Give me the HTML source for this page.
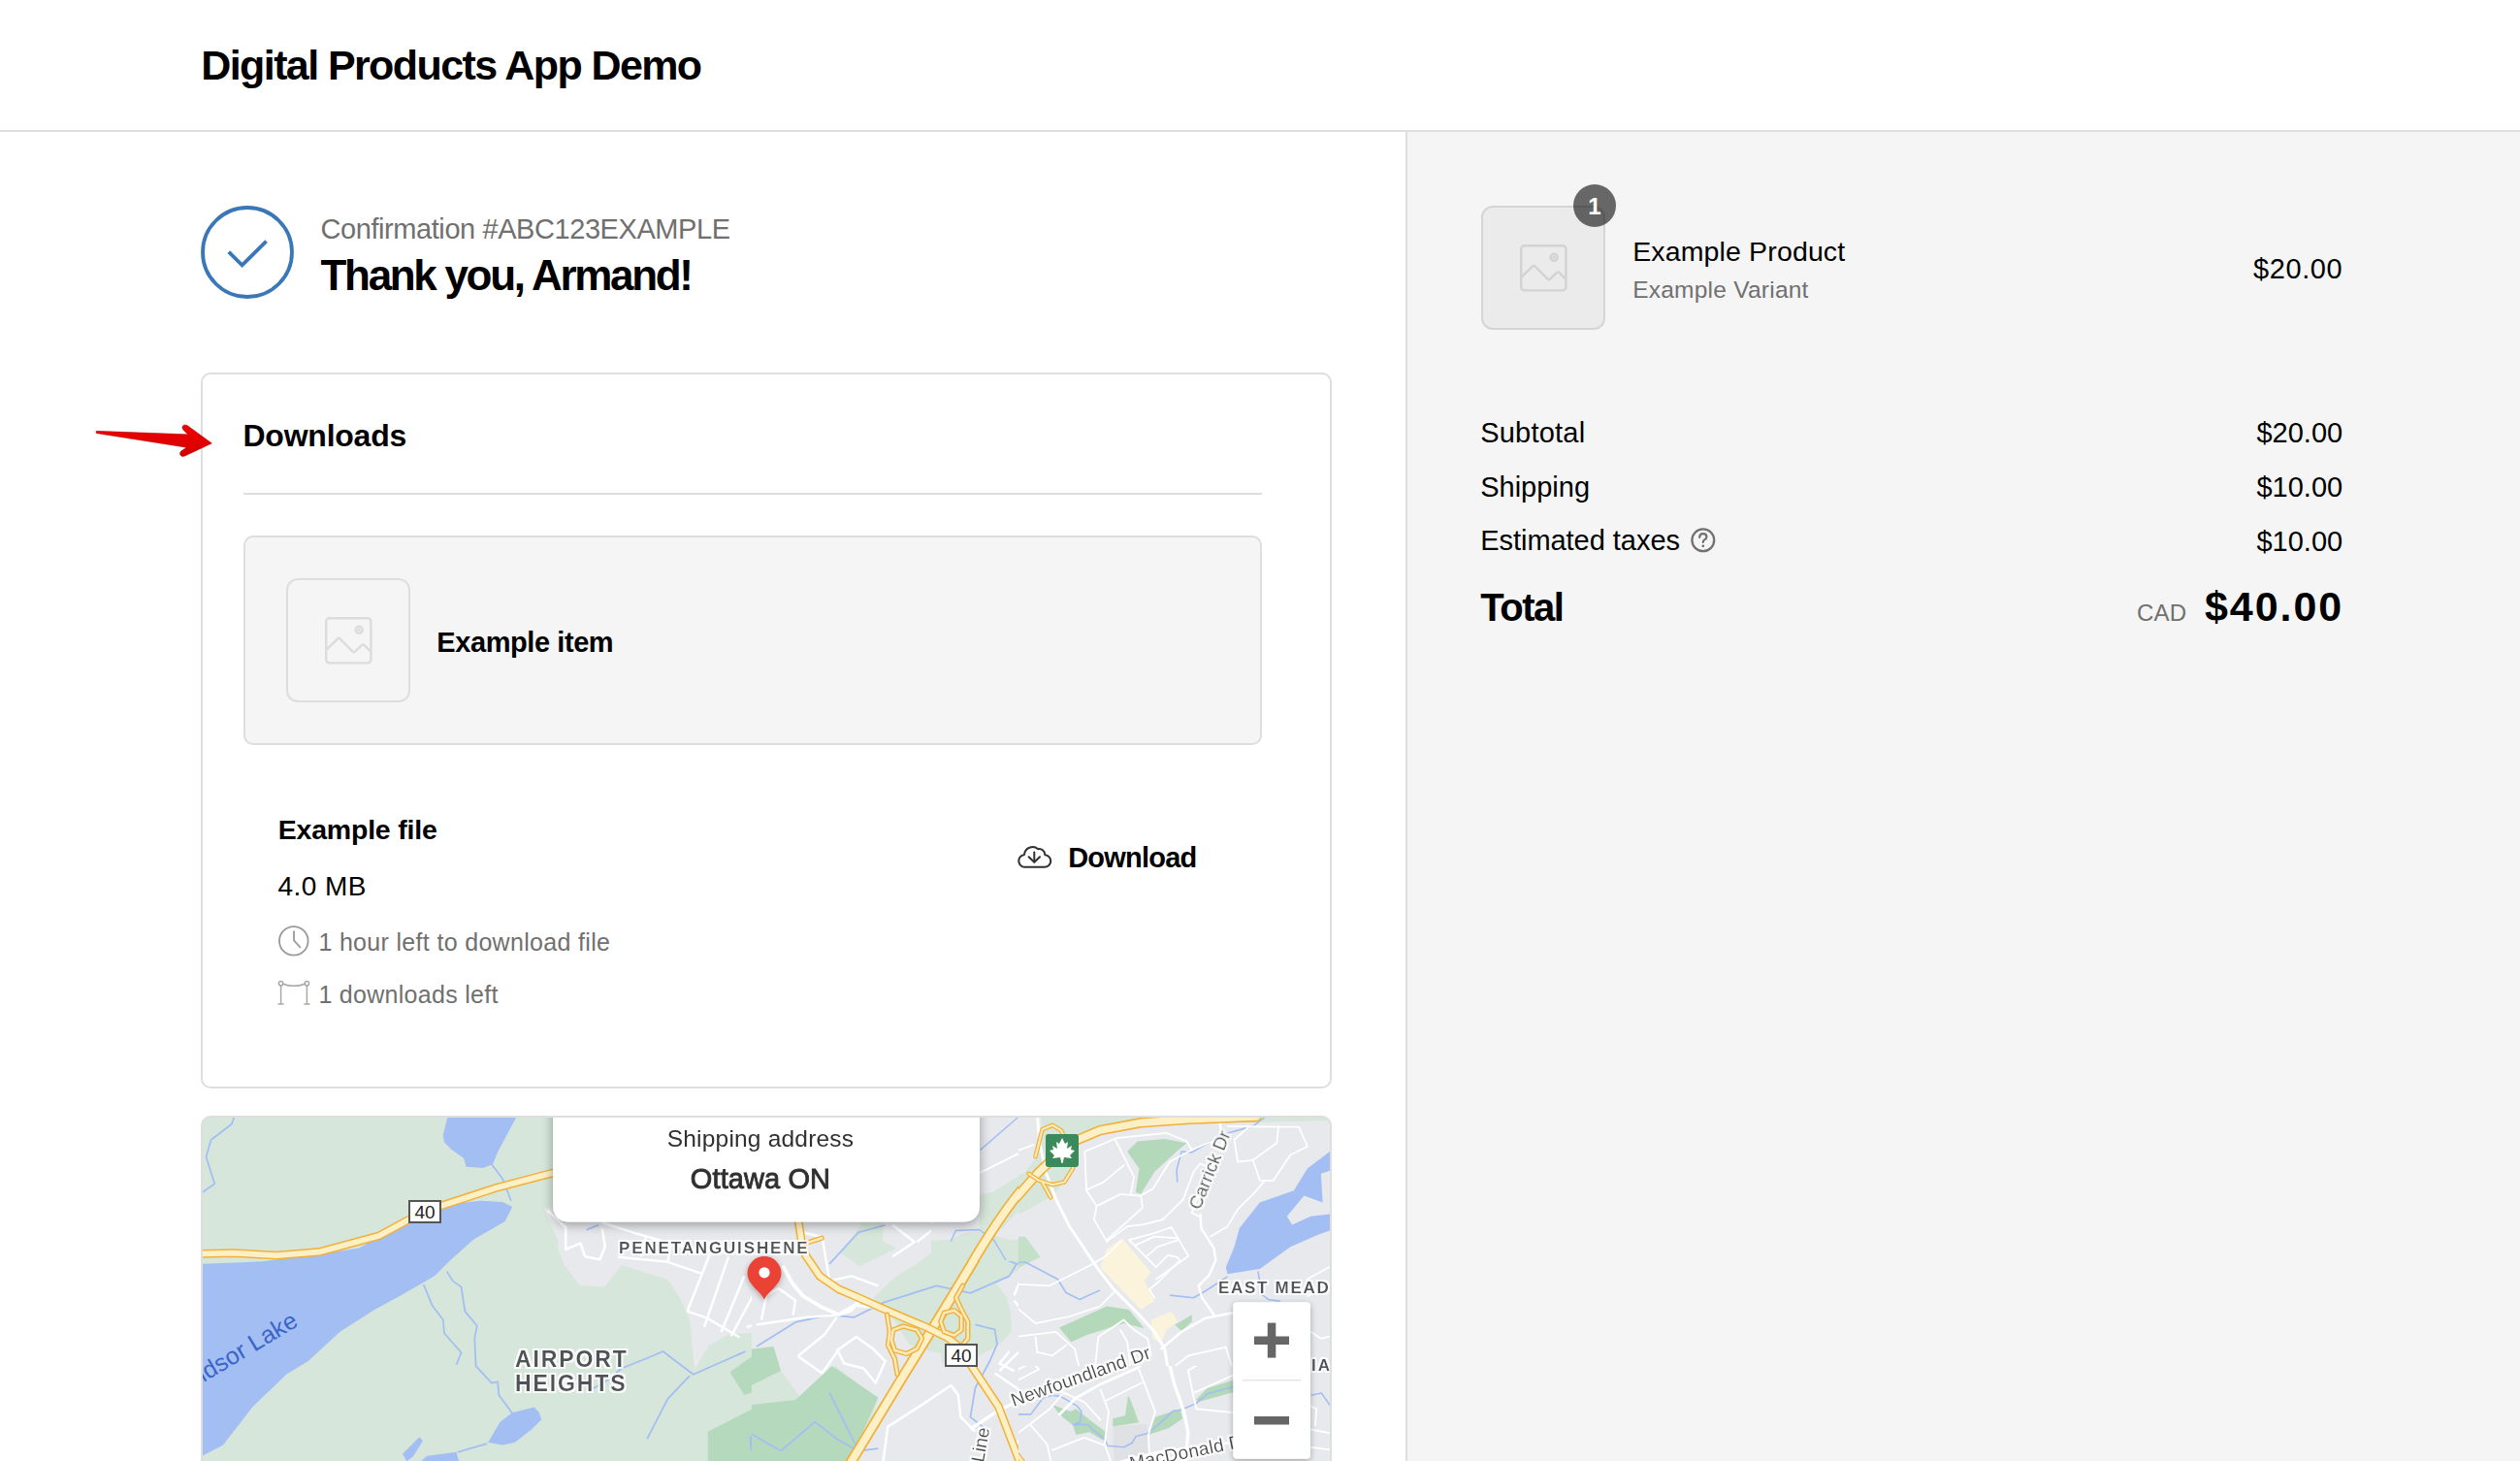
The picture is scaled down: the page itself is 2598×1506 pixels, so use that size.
<!DOCTYPE html>
<html><head><meta charset="utf-8"><style>
html,body{margin:0;padding:0;}
body{width:2598px;height:1506px;position:relative;overflow:hidden;background:#fff;font-family:"Liberation Sans",sans-serif;}
.t{position:absolute;white-space:nowrap;}
.a{position:absolute;box-sizing:border-box;}
</style></head><body>
<!-- header border -->
<div class="a" style="left:0;top:134px;width:2598px;height:2px;background:#dedede"></div>
<!-- side panel -->
<div class="a" style="left:1449px;top:134px;width:1149px;height:1372px;background:#f5f5f5;border-left:2px solid #dedede;border-top:2px solid #dedede"></div>
<!-- check circle -->
<svg class="a" style="left:0;top:0;z-index:5" width="1449" height="1506" viewBox="0 0 1449 1506">
<circle cx="255" cy="260" r="46" fill="none" stroke="#3a77b8" stroke-width="3.8"/>
<polyline points="235.8,259.6 249.6,273.4 274.6,248.6" fill="none" stroke="#3a77b8" stroke-width="3.8"/>
<defs><linearGradient id="arrowg" x1="0" y1="0" x2="0" y2="1"><stop offset="0" stop-color="#f00000"/><stop offset="1" stop-color="#d20000"/></linearGradient></defs>
<!-- red arrow -->
<path d="M99.2,444.3 L193.6,447.8 L189,443.2 Q186.6,440 189.2,438.4 Q191.2,437.2 193.4,438.8 L218.4,456.9 L190.6,470.1 Q187.4,471.4 185.9,469 Q184.6,466.4 187.4,464.6 L192.2,461.2 L99.2,446.6 Z" fill="url(#arrowg)" stroke="#a80000" stroke-width="0.5"/>
<!-- clock icon -->
<circle cx="302.8" cy="969.9" r="14.8" fill="none" stroke="#9a9a9a" stroke-width="1.8"/>
<polyline points="303,959.6 303,969.4 309.9,977" fill="none" stroke="#9a9a9a" stroke-width="1.8"/>
<!-- stanchion icon -->
<g fill="none" stroke="#a8a8a8" stroke-width="1.5">
<circle cx="289.6" cy="1013.8" r="2.2"/>
<circle cx="316.4" cy="1013.8" r="2.2"/>
<path d="M291.8,1014.2 Q303,1018.5 314.2,1014.2"/>
<line x1="289.6" y1="1016" x2="289.6" y2="1035"/>
<line x1="316.4" y1="1016" x2="316.4" y2="1035"/>
<line x1="286.5" y1="1035" x2="292.6" y2="1035"/>
<line x1="313.4" y1="1035" x2="319.5" y2="1035"/>
</g>
<!-- cloud download -->
<g fill="none" stroke="#303030" stroke-width="2" stroke-linejoin="round" stroke-linecap="round">
<path d="M1057.5,893.8 A5.9,5.9 0 0 1 1056,881 A8.6,8.6 0 0 1 1070.2,875.2 A6,6 0 0 1 1077.3,881.2 A6.3,6.3 0 0 1 1076.5,893.8 Z"/>
<polyline points="1066.3,878.4 1066.3,888.6"/>
<polyline points="1060.6,883.2 1066.3,888.8 1072,883.2"/>
</g>

</svg>
<!-- downloads card -->
<div class="a" style="left:207px;top:384px;width:1166px;height:738px;border:2px solid #dedede;border-radius:10px"></div>
<div class="a" style="left:251px;top:508px;width:1050px;height:2px;background:#dedede"></div>
<div class="a" style="left:251px;top:552px;width:1050px;height:216px;background:#f5f5f5;border:2px solid #dedede;border-radius:10px"></div>
<div class="a" style="left:295px;top:596px;width:128px;height:128px;border:2px solid #dedede;border-radius:12px"></div>
<svg class="a" style="left:335.2px;top:636px;" width="50" height="50" viewBox="0 0 50 50">
<g fill="none" stroke="#dcdcdc" stroke-width="2.4" stroke-linejoin="round">
<rect x="1.2" y="1.2" width="46.2" height="46.2" rx="3.5"/>
<circle cx="35.2" cy="13.3" r="3.6"/><circle cx="35.2" cy="13.3" r="0.7"/>
<path d="M1.5,33.6 L13.2,22.3 Q14.3,21.2 15.4,22.3 L28.6,35.6 Q29.8,36.8 31,35.6 L38.2,28.9 Q39.4,27.9 40.5,29 L47,35.4"/>
</g></svg>
<!-- order summary thumb -->
<div class="a" style="left:1527px;top:212px;width:128px;height:128px;background:#ebebeb;border:2px solid #d5d5d5;border-radius:12px"></div>
<svg class="a" style="left:1566.5px;top:251.5px;" width="50" height="50" viewBox="0 0 50 50">
<g fill="none" stroke="#d3d3d3" stroke-width="2.4" stroke-linejoin="round">
<rect x="1.2" y="1.2" width="46.2" height="46.2" rx="3.5"/>
<circle cx="35.2" cy="13.3" r="3.6"/><circle cx="35.2" cy="13.3" r="0.7"/>
<path d="M1.5,33.6 L13.2,22.3 Q14.3,21.2 15.4,22.3 L28.6,35.6 Q29.8,36.8 31,35.6 L38.2,28.9 Q39.4,27.9 40.5,29 L47,35.4"/>
</g></svg>
<div class="a" style="left:1621.8px;top:190px;width:44px;height:44px;border-radius:50%;background:rgba(0,0,0,0.58);"></div>
<!-- question icon -->
<svg class="a" style="left:1741px;top:542px" width="30" height="30" viewBox="0 0 30 30">
<circle cx="14.8" cy="14.8" r="11.4" fill="none" stroke="#707070" stroke-width="2.3"/>
<path d="M11.2,12 Q11.2,8.2 14.8,8.2 Q18.4,8.2 18.4,11.4 Q18.4,13.2 16.2,14.4 Q14.8,15.2 14.8,17" fill="none" stroke="#707070" stroke-width="2.2" stroke-linecap="round"/>
<circle cx="14.8" cy="20.8" r="1.4" fill="#707070"/>
</svg>

<div class="a" style="left:207px;top:1150px;width:1166px;height:380px;border:2px solid #dedede;border-radius:10px;overflow:hidden;background:#d6e6da">
<svg width="1162" height="376" viewBox="209 1152 1162 376" style="position:absolute;left:0;top:0;display:block">
<defs>
<filter id="sh" x="-20%" y="-20%" width="140%" height="160%"><feGaussianBlur in="SourceAlpha" stdDeviation="6"/><feOffset dy="3"/><feComponentTransfer><feFuncA type="linear" slope="0.35"/></feComponentTransfer><feMerge><feMergeNode/><feMergeNode in="SourceGraphic"/></feMerge></filter>
<filter id="sh2" x="-50%" y="-50%" width="200%" height="200%"><feGaussianBlur in="SourceAlpha" stdDeviation="3"/><feOffset dy="2"/><feComponentTransfer><feFuncA type="linear" slope="0.3"/></feComponentTransfer><feMerge><feMergeNode/><feMergeNode in="SourceGraphic"/></feMerge></filter>
<filter id="halo"><feMorphology operator="dilate" radius="1.5" in="SourceAlpha" result="d"/><feFlood flood-color="#fff" flood-opacity="0.85"/><feComposite in2="d" operator="in"/><feMerge><feMergeNode/><feMergeNode in="SourceGraphic"/></feMerge></filter>
<clipPath id="clipB"><path clip-rule="evenodd" d="M200,1140 H1050 V1540 H200 Z M960,1140 V1300 H1050 V1140 Z"/></clipPath>
<clipPath id="clipF"><rect x="960" y="1140" width="90" height="160"/></clipPath>
<clipPath id="clipE"><rect x="1050" y="1408" width="350" height="120"/></clipPath>
<clipPath id="clipD"><rect x="1050" y="1140" width="350" height="268"/></clipPath>
</defs>
<!-- ============ TILE A ============ -->
<g transform="translate(200,1140) scale(0.2505)">
 <!-- urban gray A -->
 <path fill="#e8e9ec" d="M1440,420 L1500,560 L1495,580 L1520,650 L1590,740 L1690,745 L1760,655 L1950,715 L2000,790 L2040,880 L2060,1085 L2120,985 L2200,940 L2400,925 L2400,420 Z"/>
 <!-- dark green parks A -->
 <path fill="#b5d9bc" d="M2205,1095 L2355,990 L2400,990 L2400,1140 L2265,1190 Z"/>
 <path fill="#b5d9bc" d="M2115,1340 L2400,1195 L2400,1470 L2115,1470 Z"/>
 <!-- lakes A -->
 <g fill="#a3bef3">
 <path d="M35,650 L280,640 L520,610 L680,585 L880,470 L1040,405 L1180,390 L1270,395 L1310,415 L1280,475 L1150,550 L1050,640 L990,700 L850,780 L740,840 L600,930 L470,1050 L380,1105 L240,1240 L120,1395 L35,1440 Z"/>
 <path d="M1045,40 L1330,40 L1250,190 L1240,215 L1230,240 L1190,255 L1120,250 L1110,215 L1060,180 L1030,150 L1025,120 Z"/>
 <path d="M1210,1385 L1260,1300 L1310,1262 L1400,1240 L1420,1260 L1430,1290 L1390,1330 L1320,1385 L1270,1395 Z"/>
 <path d="M858,1432 L928,1362 L942,1378 L902,1442 L876,1462 Z"/>
 <path d="M925,1470 L960,1440 L1080,1424 L1092,1470 Z"/>
 <path d="M2285,1360 L2330,1360 L2395,1400 L2395,1430 L2290,1420 Z"/>
 </g>
 <!-- streams A -->
 <g fill="none" stroke="#a3bef3" stroke-width="7" stroke-linejoin="round">
 <path d="M165,47 L155,75 L70,140 L50,210 L85,320 L35,355"/>
 <path d="M1225,240 L1270,300 L1305,390"/>
 <path d="M945,735 L980,820 L1025,880 L1030,935 L1100,1015 L1080,1065"/>
 <path d="M1040,680 L1065,720 L1100,745 L1115,845 L1165,905 L1155,955 L1160,1070 L1225,1140 L1250,1135 L1255,1190 L1310,1265"/>
 <path d="M1085,1425 L1205,1390"/>
 <path d="M1640,1165 L1700,1130 L1760,1080 L1860,1040 L1930,1010 L2055,1105 L2180,1050 L2270,1010"/>
 <path d="M1865,1370 L1950,1205 L2040,1110"/>
 <path d="M2300,985 L2340,955 L2400,920"/>
 <path d="M1615,510 L1665,490"/>
 </g>
 <!-- white roads A -->
 <g fill="none" stroke="#ffffff" stroke-width="10" stroke-linejoin="round">
 <path d="M1455,430 L1530,500 L1530,590 L1590,565 L1610,620 L1670,632 L1692,580 L1680,505"/>
 <path d="M1680,480 L1820,525 L1900,548 L2050,590 L2200,600 L2400,600"/>
 <path d="M1745,622 L1950,642 L2090,690"/>
 <path d="M2030,845 L2125,605"/>
 <path d="M2100,910 L2200,620"/>
 <path d="M2170,930 L2265,700"/>
 <path d="M2210,948 L2320,745"/>
 <path d="M2030,845 L2110,872 L2245,952"/>
 <path d="M2275,910 L2400,870"/>
 <path d="M2340,905 L2335,870 L2400,800"/>
 <path d="M1860,540 L1840,620"/>
 <path d="M1950,640 L1965,560"/>
 </g>
 <!-- highway A -->
 <path fill="none" stroke="#f0b13a" stroke-width="35" stroke-linejoin="round" d="M35,608 L160,605 L340,615 L520,600 L760,535 L880,470 L1020,410 L1250,335 L1440,285 L1500,270"/>
 <path fill="none" stroke="#fdefc6" stroke-width="23" stroke-linejoin="round" d="M35,608 L160,605 L340,615 L520,600 L760,535 L880,470 L1020,410 L1250,335 L1440,285 L1500,270"/>
</g>
<!-- ============ TILE B ============ -->
<g clip-path="url(#clipB)"><g transform="translate(780,1140) scale(0.2505)">
 <!-- urban gray B (covers most of tile) -->
 <path fill="#e8e9ec" d="M-20,40 L2400,40 L2400,1470 L-20,1470 Z"/>
 <!-- light green natural B -->
 <g fill="#d6e6da">
 <path d="M341,603 L408,523 L436,481 L520,481 L520,558 L576,586 L425,659 Z"/>
 <path d="M481,789 L569,705 L660,649 L751,579 L779,551 L869,523 L960,551 L1107,541 L1170,621 L1051,691 L988,733 L1030,789 L1048,859 L1048,929 L996,985 L905,1034 L761,1062 L761,1020 L632,985 L569,887 Z"/>
 <path d="M920,180 L1150,40 L1330,40 L1300,90 L1180,200 L1060,300 L960,380 L860,470 L780,470 L800,380 Z"/>
 <path d="M-20,1150 L100,1090 L180,1200 L163,1237 L-20,1240 Z"/>
 <path d="M163,1237 L324,1069 L499,1209 L450,1377 L394,1470 L300,1470 Z"/>
 </g>
 <!-- dark green parks B -->
 <g fill="#b5d9bc">
 <path d="M1520,190 L1570,140 L1680,135 L1770,160 L1660,230 L1600,330 L1560,360 L1560,300 Z"/>
 <path d="M1250,910 L1420,830 L1530,840 L1620,900 L1480,920 L1300,970 Z"/>
 <path d="M1720,890 L1790,860 L1780,900 L1720,930 Z"/>
 <path d="M-20,1000 L70,990 L100,1090 L-20,1150 Z"/>
 <path d="M-20,1230 L160,1210 L310,1070 L500,1200 L380,1470 L-20,1470 Z"/>
 <path d="M1220,1230 L1330,1260 L1400,1320 L1340,1330 L1240,1280 Z"/>
 <path d="M1470,1290 L1530,1200 L1570,1290 L1470,1310 Z"/>
 <path d="M1610,1300 L1800,1230 L1960,1140 L1960,1200 L1700,1340 Z"/>
 </g>
 <!-- tan commercial -->
 <g fill="#fcf2d8">
 <path d="M1410,660 L1450,580 L1510,560 L1620,690 L1630,800 L1590,840 L1420,680 Z"/>
 <path d="M1620,880 L1700,845 L1730,900 L1660,980 L1640,960 Z"/>
 </g>
 <!-- lake B -->
 <path fill="#a3bef3" d="M1930,680 L1980,560 L2060,470 L2150,370 L2250,300 L2360,180 L2360,380 L2330,390 L2230,380 L2190,430 L2200,490 L2360,440 L2360,480 L2290,530 L2170,600 L2060,660 L1960,690 Z"/>
 <!-- streams B -->
 <g fill="none" stroke="#a3bef3" stroke-width="7" stroke-linejoin="round">
 <path d="M920,180 L1070,50"/>
 <path d="M300,650 L420,520 L530,490"/>
 <path d="M800,560 L820,515 L920,510 L1020,630 L1070,650 L1130,640 L1230,700 L1280,780 L1330,790 L1410,760"/>
 <path d="M1070,650 L1040,700 L880,770 L740,740 L520,810 L400,870 L300,860 L160,890 L0,990"/>
 <path d="M1700,780 L1800,790 L1830,760"/>
 <path d="M1730,190 L1740,310"/>
 <path d="M1760,190 L1900,130 L2000,90 L2100,50"/>
 <path d="M900,900 L980,920 L990,980 L960,1050 L900,1160 L880,1280 L930,1320"/>
 <path d="M300,1180 L420,1420"/>
 <path d="M-20,1350 L100,1420 L240,1300 L330,1370 L420,1420 L500,1410"/>
 <path d="M1200,1180 L1300,1210 L1350,1230 L1440,1310 L1500,1360 L1580,1350 L1650,1300 L1750,1260 L1960,1200"/>
 <path d="M2150,1170 L2360,1200"/>
 </g>
 <!-- white roads B -->
 <g fill="none" stroke="#ffffff" stroke-width="10" stroke-linejoin="round">
 <path stroke-width="16" d="M1160,47 L1175,200 L1210,370 L1280,490 L1400,680 L1500,780 L1600,880 L1680,990 L1710,1100 L1760,1300 L1780,1470"/>
 <path stroke-width="13" d="M880,1330 L1000,1250 L1200,1160 L1400,1080 L1640,1010 L1880,880 L1960,850"/>
 <path stroke-width="13" d="M1790,410 L1830,480 L1885,600 L1870,700 L1830,740 L1880,860"/>
 <path d="M1360,190 L1480,140 L1600,110 L1700,105 L1780,150"/>
 <path d="M1350,340 L1400,420 L1390,470 L1440,560"/>
 <path d="M1350,340 L1480,290 L1540,310 L1560,360 L1590,380 L1580,420 L1440,540"/>
 <path d="M1480,140 L1520,230 L1550,310"/>
 <path d="M1600,110 L1680,135 L1770,160 L1710,230 L1650,310"/>
 <path d="M1440,540 L1520,560 L1720,500 L1780,610 L1700,720"/>
 <path d="M1560,580 L1700,520 L1740,570 L1630,650"/>
 <path d="M1580,600 L1640,660 L1720,620"/>
 <path d="M1780,150 L1950,110 L2040,90 L2150,95 L2230,90 L2270,170 L2160,220 L2050,215 L1980,200"/>
 <path d="M1980,200 L2080,300 L2030,340 L1960,470 L1880,520"/>
 <path d="M1950,110 L1960,220 L2050,215 L2150,95"/>
 <path d="M1790,410 L1700,300 L1600,360"/>
 <path d="M1060,780 L1080,730 L1200,740 L1330,690 L1450,760 L1460,790 L1340,830 L1180,880 L1130,890 L1060,800"/>
 <path d="M1000,1090 L1050,1040 L1150,950 L1230,940 L1310,1000 L1330,1080"/>
 <path d="M980,1100 L1100,1180 L1140,1080 L1220,1100 L1260,1050 L1270,970"/>
 <path d="M1040,1010 L1000,1060 L1060,1090"/>
 <path d="M1390,1080 L1380,1000 L1430,910 L1520,880 L1560,960"/>
 <path d="M1450,1000 L1500,940 L1540,940"/>
 <path d="M1780,1080 L1930,1000 L1960,1090 L1800,1180 Z"/>
 <path d="M1420,1170 L1460,1380 L1640,1270 L1600,1170"/>
 <path d="M1130,1320 L1280,1230 L1380,1280 L1250,1360"/>
 <path d="M1060,1400 L1130,1320"/>
 <path d="M0,900 L200,870 L330,860 L400,820 L490,830 L600,880 L700,920"/>
 <path d="M170,1030 L280,940 L330,870"/>
 <path d="M170,1030 L270,1100 L340,1000 L410,950 L480,1000 L530,1050 L490,1140 L440,1080 L360,1060 L330,1000"/>
 <path d="M20,880 L40,780 L90,750 L160,800 L150,860"/>
 <path d="M190,520 L270,540"/>
 <path d="M270,540 L300,720 L390,700 L500,740"/>
 <path d="M400,360 L580,270 L780,160 L920,110 L1000,90"/>
 <path d="M-20,270 L160,210 L300,200 L400,190"/>
 <path d="M1020,170 L920,230 L880,330"/>
 <path d="M520,1470 L540,1320 L680,1230 L800,1150 L830,1190 L840,1280 L900,1340"/>
 <path d="M560,620 L650,560 L560,490"/>
 <path d="M660,560 L760,480"/>
 <path d="M2180,700 L2340,660 L2360,740"/>
 <path d="M2290,1070 L2190,990 L2340,900"/>
 <path d="M2360,980 L2280,940"/>
 <path d="M1860,1190 L1920,1440"/>
 </g>
 <!-- highways B -->
 <g fill="none" stroke-linejoin="round" stroke-linecap="round">
 <!-- main diagonal -->
 <path stroke="#f0b13a" stroke-width="45" d="M380,1480 L592,1130 L752,870 L977,500 L1014,439 L1180,250 L1330,120 L1500,62 L1700,50 L2100,40"/>
 <path stroke="#fdefc6" stroke-width="31" d="M380,1480 L592,1130 L752,870 L977,500 L1014,439 L1180,250 L1330,120 L1500,62 L1700,50 L2100,40"/>
 <!-- top cloverleaf -->
 <path stroke="#f0b13a" stroke-width="18" d="M1150,190 L1180,100 L1230,90 L1250,120 L1300,140 M1150,310 L1240,330 L1300,290 L1300,220"/>
 <path stroke="#fdebbd" stroke-width="8" d="M1150,190 L1180,100 L1230,90 L1250,120 L1300,140 M1150,310 L1240,330 L1300,290 L1300,220"/>
 </g>
</g>
</g>
<!-- ============ TILE F (page coords) ============ -->
<g clip-path="url(#clipF)">
 <rect x="950" y="1140" width="110" height="170" fill="#e8e9ed"/>
 <path fill="#d6e6da" d="M1010,1231 L1022.8,1229 L1056.2,1208.7 L1067.4,1194.5 L1073.5,1185.4 L1073.5,1152 L1100,1152 L1100,1240 L1051.2,1246.2 L1036,1263.4 L1028.9,1269.5 L1010,1270.5 Z"/>
 <path fill="#d6e6da" d="M950,1279.6 L980.3,1277.6 L992.4,1271.5 L1008.6,1268.5 L1024.8,1273.6 L1043,1278.6 L1058.3,1275.6 L1073.5,1295.8 L1060,1310 L950,1310 Z"/>
 <path fill="none" stroke="#a3bef3" stroke-width="1.4" d="M1010.6,1185.4 L1049.1,1152"/>
 <path fill="none" stroke="#a3bef3" stroke-width="1.4" d="M980.3,1279.6 L985.3,1268.5 L1009.6,1267.5 L1024.8,1278.6 L1037,1298.9"/>
 <path fill="none" stroke="#fff" stroke-width="2" d="M1010.6,1208.7 L1051.2,1188.5 L1067.4,1179.3 L1072,1180.4"/>
 <path fill="none" stroke="#fff" stroke-width="2" d="M960,1260 L975,1252 L1000,1240"/>
 <path fill="none" stroke="#f0b13a" stroke-width="5" stroke-linejoin="round" d="M1070.4,1185.4 L1061,1198 L1054,1212"/>
 <path fill="none" stroke="#fdefc6" stroke-width="2.6" stroke-linejoin="round" d="M1070.4,1185.4 L1061,1198 L1054,1212"/>
 <path fill="none" stroke="#f0b13a" stroke-width="11" stroke-linecap="round" d="M1002,1302 C1020,1272 1040,1240 1060,1219 S1095,1184 1140,1162"/>
 <path fill="none" stroke="#fdefc6" stroke-width="7.6" stroke-linecap="round" d="M1002,1302 C1020,1272 1040,1240 1060,1219 S1095,1184 1140,1162"/>
</g>
<!-- ============ TILE C (770,1250 s5.706) ============ -->
<g transform="translate(770,1250) scale(0.17525)" fill="none" stroke-linejoin="round" stroke-linecap="round">
 <!-- thick white road -->
 <path stroke="#fff" stroke-width="22" d="M215,320 L270,420 L330,490 L430,550 L540,600 L610,575 L660,520"/>
 <!-- route 40 -->
 <path stroke="#f0b13a" stroke-width="50" d="M302,40 L320,160 L345,250 L430,375 L540,450 L645,495 L825,575 L940,625 L1060,675 L1180,735 L1260,800 L1320,900 L1480,1140 L1610,1480"/>
 <path stroke="#fdefc6" stroke-width="33" d="M302,40 L320,160 L345,250 L430,375 L540,450 L645,495 L825,575 L940,625 L1060,675 L1180,735 L1260,800 L1320,900 L1480,1140 L1610,1480"/>
 <!-- ramp stub -->
 <path stroke="#f0b13a" stroke-width="30" d="M345,180 L440,150"/>
 <path stroke="#fdebbd" stroke-width="14" d="M345,180 L440,150"/>
 <!-- loops -->
 <g stroke="#f0b13a" stroke-width="30">
 <path d="M860,690 L920,668 L1000,690 L1030,740 L1000,800 L940,830 L870,810 L850,750 Z"/>
 <path d="M1160,590 L1220,575 L1262,610 L1262,690 L1220,722 L1160,700 L1140,640 Z"/>
 <path d="M825,600 L840,700 L830,780 L870,860 L885,950"/>
 <path d="M1270,430 L1230,500 L1262,570 L1300,640 L1300,740 L1250,800"/>
 </g>
 <g stroke="#fdebbd" stroke-width="14">
 <path d="M860,690 L920,668 L1000,690 L1030,740 L1000,800 L940,830 L870,810 L850,750 Z"/>
 <path d="M1160,590 L1220,575 L1262,610 L1262,690 L1220,722 L1160,700 L1140,640 Z"/>
 <path d="M825,600 L840,700 L830,780 L870,860 L885,950"/>
 <path d="M1270,430 L1230,500 L1262,570 L1300,640 L1300,740 L1250,800"/>
 </g>
</g>
<!-- ============ TILE D (1050,1152 s5.707) ============ -->
<g clip-path="url(#clipD)"><g transform="translate(1050,1152) scale(0.17522)">
 <rect x="-100" y="-100" width="2100" height="1600" fill="#e8e9ed"/>
 <path fill="#d6e6da" d="M-50,360 L35,324 L99,243 L134,191 L134,-80 L1900,-80 L1900,15 L1300,30 L600,60 L360,150 L330,300 L200,460 L-50,600 Z"/>
 <path fill="#c5e0c9" d="M-50,700 L40,700 L130,820 L-50,910 Z"/>
 <g fill="#b3d8ba">
 <path d="M640,200 L700,140 L860,125 L990,150 L930,200 L800,320 L720,450 L690,440 L710,300 Z"/>
 <path d="M240,1235 L520,1110 L650,1130 L740,1240 L620,1210 L400,1280 L310,1320 Z"/>
 <path d="M920,1220 L1020,1160 L1020,1200 L960,1255 Z"/>
 </g>
 <g fill="#fcf3dc">
 <path d="M520,770 L610,710 L780,910 L740,960 L800,1080 L720,1130 L480,880 Z"/>
 <path d="M780,1190 L900,1140 L935,1200 L870,1250 L840,1330 L790,1300 Z"/>
 </g>
 <path fill="#a3bef3" d="M1220,880 L1270,760 L1300,650 L1420,500 L1620,430 L1700,300 L1832,200 L1900,180 L1900,290 L1780,330 L1790,500 L1680,460 L1580,580 L1610,630 L1720,580 L1900,560 L1900,640 L1760,690 L1600,760 L1420,890 L1230,920 Z"/>
 <g fill="none" stroke="#a3bef3" stroke-width="9" stroke-linejoin="round">
 <path d="M935,380 L930,310 L960,200 L1020,205 L1200,100 L1380,50 L1460,-10"/>
 <path d="M-20,850 L40,850 L230,950 L280,1030 L360,1070 L480,1015"/>
 <path d="M890,1045 L1030,1060 L1100,1020 L1230,935"/>
 <path d="M1410,905 L1430,1040 L1470,1070 L1540,1080"/>
 </g>
 <g fill="none" stroke="#fff" stroke-width="10" stroke-linejoin="round" stroke-linecap="round">
 <path stroke-width="17" d="M110,-20 L125,150 L160,320 L220,480 L300,640 L460,880 L560,1010 L700,1150 L800,1260 L860,1360 L880,1480"/>
 <path stroke-width="14" d="M1180,-20 L1195,110 L1200,200"/>
 <path stroke-width="14" d="M1070,570 L1075,650 L1150,770 L1160,840 L1120,930 L1060,990 L1080,1060 L1150,1160"/>
 <path stroke-width="14" d="M840,1360 L960,1260 L1100,1180 L1300,1140"/>
 <path d="M-20,200 L90,160"/>
 <path d="M400,430 L390,200 L580,120 L870,90 L990,140 L1020,190"/>
 <path d="M400,430 L460,520"/>
 <path d="M400,425 L500,380 L620,280"/>
 <path d="M570,130 L680,350 L660,450"/>
 <path d="M460,520 L600,450 L720,460 L730,530 L520,720"/>
 <path d="M460,520 L445,600 L520,730"/>
 <path d="M720,460 L790,420 L890,260 L1020,190 L1160,130"/>
 <path d="M520,730 L640,640 L730,630 L850,600 L970,480 L1030,320 L1070,270 L1120,295 L1050,480 L1020,560 L1060,580"/>
 <path d="M650,720 L800,680 L900,645 L1000,815 L810,950"/>
 <path d="M690,750 L800,700 L940,710"/>
 <path d="M750,820 L820,760 L940,720"/>
 <path d="M810,880 L880,810 L930,820 L950,840 L820,970 L770,1010 L800,1060"/>
 <path d="M650,720 L810,880"/>
 <path d="M-20,980 L180,990 L440,860 L520,810 L600,730"/>
 <path d="M-20,1110 L100,1210 L300,1170 L480,1110 L560,1030"/>
 <path d="M1230,50 L1530,55 L1650,55 L1700,170 L1600,220 L1500,370 L1420,370 L1380,250 L1290,260 L1270,130 L1350,60"/>
 <path d="M1380,250 L1520,150 L1530,50"/>
 <path d="M1450,370 L1390,440 L1290,540 L1230,640 L1130,700"/>
 <path d="M1900,840 L1700,950"/>
 <path d="M-20,1290 L220,1260 L330,1360 L360,1480"/>
 <path d="M100,1290 L110,1380 L200,1400 L280,1340"/>
 <path d="M450,1480 L470,1290 L560,1230 L620,1190 L680,1250 L760,1300 L780,1400"/>
 <path d="M600,1250 L640,1320 L660,1480"/>
 <path d="M900,1480 L1000,1400 L1220,1350 L1260,1480"/>
 <path d="M1700,1050 L1900,960"/>
 <path d="M1720,1260 L1780,1300 L1900,1270"/>
 </g>
 <g fill="none" stroke-linejoin="round" stroke-linecap="round">
 <path stroke="#f0b13a" stroke-width="60" d="M-91,559 L120,320 L300,150 L480,75 L720,30 L1000,10 L1400,-5"/>
 <path stroke="#fdefc6" stroke-width="42" d="M-91,559 L120,320 L300,150 L480,75 L720,30 L1000,10 L1400,-5"/>
 <path stroke="#f0b13a" stroke-width="26" d="M100,230 L140,70 L200,45 L250,75 L270,110 M310,160 L320,300 L270,380 L200,395 L120,370 L60,330 M140,380 L190,470"/>
 <path stroke="#fdebbd" stroke-width="12" d="M100,230 L140,70 L200,45 L250,75 L270,110 M310,160 L320,300 L270,380 L200,395 L120,370 L60,330 M140,380 L190,470"/>
 </g>
</g></g>
<!-- ============ TILE E (1050,1300 s7.093) ============ -->
<g clip-path="url(#clipE)"><g transform="translate(1050,1300) scale(0.14098)">
 <rect x="-100" y="600" width="2500" height="1000" fill="#e8e9ed"/>
 <path fill="#e0e1e5" d="M690,1210 L940,1190 L960,1480 L700,1480 Z"/>
 <g fill="#b3d8ba">
 <path d="M250,1050 L380,1100 L420,1080 L520,1160 L640,1250 L620,1310 L520,1250 L420,1270 L400,1200 L300,1120 Z"/>
 <path d="M690,1150 L780,1130 L800,1000 L770,1010 L810,990 L880,1180 L690,1210 Z"/>
 <path d="M950,1270 L1000,1140 L1180,1080 L1200,1150 L1100,1220 Z"/>
 <path d="M1300,1010 L1380,930 L1600,860 L1600,950 L1310,1030 Z"/>
 </g>
 <g fill="none" stroke="#a3bef3" stroke-width="11" stroke-linejoin="round">
 <path d="M-20,1120 L90,1120 L180,1000 L250,980 L310,990 L430,1060 L460,1100 L450,1180 L400,1195 L510,1195 L540,1230 L630,1300 L650,1350 L770,1360 L830,1330 L860,1280 L940,1260 L1020,1200 L1130,1095 L1180,1090 L1300,1040 L1380,970 L1600,910"/>
 <path d="M2140,980 L2215,965 L2290,1070"/>
 </g>
 <g fill="none" stroke="#fff" stroke-width="13" stroke-linejoin="round" stroke-linecap="round">
 <path stroke-width="24" d="M1040,620 L1090,700 L1140,900 L1210,1100 L1240,1250 L1220,1480"/>
 <path stroke-width="20" d="M300,1120 L420,1000 L600,900 L870,780 L1000,680 L1080,640 L1300,480 L1450,400 L1600,370"/>
 <path stroke-width="20" d="M700,1480 L1000,1400 L1600,1320"/>
 <path d="M880,790 L1000,1100 L950,1270 L960,1480"/>
 <path d="M600,940 L660,1100 L630,1340 L680,1480"/>
 <path d="M640,1020 L900,890"/>
 <path d="M1240,800 L1300,1080 L1600,1110"/>
 <path d="M1240,800 L1530,630 L1600,700"/>
 <path d="M1290,960 L1600,820"/>
 <path d="M-20,1270 L230,1080 L330,960 L480,1030 L600,1160"/>
 <path d="M90,1200 L210,1340 L240,1480"/>
 <path d="M250,1380 L480,1290 L640,1350"/>
 <path d="M-20,800 L100,740 L150,790 L-20,880"/>
 <path d="M2135,1230 L2290,1260"/>
 <path d="M2135,1060 L2180,1080 L2170,1200"/>
 <path d="M2135,770 L2290,700"/>
 <path d="M2135,1360 L2290,1380"/>
 </g>
 <path fill="none" stroke="#f0b13a" stroke-width="40" d="M-60,1350 L40,1480"/>
 <path fill="none" stroke="#fdebbd" stroke-width="24" d="M-60,1350 L40,1480"/>
</g></g>
<!-- route shields -->
<g font-family="Liberation Sans" font-size="19" fill="#222">
<rect x="422" y="1238" width="32" height="22" fill="#fff" stroke="#555" stroke-width="2"/>
<text x="438" y="1256" text-anchor="middle">40</text>
<rect x="975" y="1386" width="32" height="22" fill="#fff" stroke="#555" stroke-width="2"/>
<text x="991" y="1404" text-anchor="middle">40</text>
</g>
<!-- maple leaf sign -->
<rect x="1078" y="1169" width="34" height="34" rx="3" fill="#3b8a5c"/>
<path fill="#fff" d="M1095,1173 L1098,1179 L1101,1177 L1100,1184 L1105,1181 L1104,1185 L1108,1186 L1103,1191 L1105,1194 L1097,1193 L1095.6,1199 L1094.4,1199 L1093,1193 L1085,1194 L1087,1191 L1082,1186 L1086,1185 L1085,1181 L1090,1184 L1089,1177 L1092,1179 Z"/>
<!-- map labels -->
<g font-family="Liberation Sans" filter="url(#halo)">
<text x="638" y="1292" font-size="17" font-weight="700" fill="#505256" letter-spacing="1.85">PENETANGUISHENE</text>
<text x="531" y="1409" font-size="23" font-weight="700" fill="#505256" letter-spacing="1.9">AIRPORT</text>
<text x="531" y="1433.5" font-size="23" font-weight="700" fill="#505256" letter-spacing="1.9">HEIGHTS</text>
<text x="1256" y="1333" font-size="17" font-weight="700" fill="#505256" letter-spacing="1.7">EAST MEADOWS</text>
<text x="1352" y="1413" font-size="17" font-weight="700" fill="#505256" letter-spacing="2">IA</text>

<text transform="translate(1237,1248) rotate(-68)" font-size="19" fill="#4a4a4a">Carrick Dr</text>
<text transform="translate(1045,1450) rotate(-19.5)" font-size="19" fill="#4a4a4a" letter-spacing="0.3">Newfoundland Dr</text>
<text transform="translate(1014,1508) rotate(-80)" font-size="19" fill="#4a4a4a">Line</text>
<text transform="translate(1166,1515) rotate(-11.5)" font-size="19" fill="#4a4a4a" letter-spacing="0.3">MacDonald Dr</text>
</g>
<text transform="translate(177.7,1444.5) rotate(-31)" font-family="Liberation Sans" font-size="25" fill="#3b64c9">Windsor Lake</text>
<!-- popup -->
<g filter="url(#sh)">
<path fill="#fff" d="M570,1120 L1010,1120 L1010,1241.6 Q1010,1259.6 992,1259.6 L588,1259.6 Q570,1259.6 570,1241.6 Z"/>
</g>
<text x="784" y="1182.4" font-family="Liberation Sans" font-size="24.5" fill="#303030" text-anchor="middle" letter-spacing="0.2">Shipping address</text>
<text x="784" y="1224.9" font-family="Liberation Sans" font-size="29" fill="#303030" text-anchor="middle" stroke="#303030" stroke-width="0.9" letter-spacing="0.1">Ottawa ON</text>
<!-- marker -->
<g filter="url(#sh2)">
<path fill="#ea4335" d="M788,1339.5 C784,1331 770.5,1324 770.5,1312.5 A17.5,17.5 0 0 1 805.5,1312.5 C805.5,1324 792,1331 788,1339.5 Z"/>
</g>
<circle cx="788" cy="1311.8" r="5.6" fill="#fff"/>
<!-- zoom control -->
<g filter="url(#sh2)"><rect x="1271.3" y="1342.3" width="79.7" height="161.5" rx="4" fill="#fff"/></g>
<rect x="1281" y="1422" width="60" height="1.5" fill="#e6e6e6"/>
<rect x="1293" y="1377.5" width="36" height="8.5" fill="#666"/>
<rect x="1306.8" y="1363.6" width="8.5" height="36" fill="#666"/>
<rect x="1293" y="1460" width="36" height="8.5" fill="#666"/>
</svg>
</div>

<div class="t" style="left:207.30px;top:45.90px;font-size:43px;line-height:43px;font-weight:700;color:#000;letter-spacing:-1.593px">Digital Products App Demo</div>
<div class="t" style="left:330.50px;top:221.65px;font-size:29px;line-height:29px;font-weight:400;color:#707070;letter-spacing:-0.425px">Confirmation #ABC123EXAMPLE</div>
<div class="t" style="left:330.50px;top:261.55px;font-size:44px;line-height:44px;font-weight:700;color:#000;letter-spacing:-2.307px">Thank you, Armand!</div>
<div class="t" style="left:250.50px;top:433.11px;font-size:32px;line-height:32px;font-weight:700;color:#000;letter-spacing:-0.240px">Downloads</div>
<div class="t" style="left:450.30px;top:647.65px;font-size:29px;line-height:29px;font-weight:700;color:#000;letter-spacing:-0.419px">Example item</div>
<div class="t" style="left:286.70px;top:840.67px;font-size:28.5px;line-height:28.5px;font-weight:700;color:#000;letter-spacing:-0.200px">Example file</div>
<div class="t" style="left:286.50px;top:900.30px;font-size:28px;line-height:28px;font-weight:400;color:#000;letter-spacing:0.468px">4.0 MB</div>
<div class="t" style="left:328.40px;top:958.64px;font-size:25px;line-height:25px;font-weight:400;color:#707070;letter-spacing:0.323px">1 hour left to download file</div>
<div class="t" style="left:328.40px;top:1012.84px;font-size:25px;line-height:25px;font-weight:400;color:#707070;letter-spacing:0.292px">1 downloads left</div>
<div class="t" style="left:1101.20px;top:869.65px;font-size:29px;line-height:29px;font-weight:700;color:#000;letter-spacing:-0.782px">Download</div>
<div class="t" style="left:1683.20px;top:244.97px;font-size:28.5px;line-height:28.5px;font-weight:400;color:#000;letter-spacing:0.141px">Example Product</div>
<div class="t" style="left:1683.20px;top:286.66px;font-size:24.5px;line-height:24.5px;font-weight:400;color:#707070;letter-spacing:0.236px">Example Variant</div>
<div class="t" style="left:2323.00px;top:262.55px;font-size:29px;line-height:29px;font-weight:400;color:#000;letter-spacing:0.592px">$20.00</div>
<div class="t" style="left:1526.20px;top:431.65px;font-size:29px;line-height:29px;font-weight:400;color:#000;letter-spacing:0.224px">Subtotal</div>
<div class="t" style="left:1526.20px;top:487.65px;font-size:29px;line-height:29px;font-weight:400;color:#000;letter-spacing:0.000px">Shipping</div>
<div class="t" style="left:1526.20px;top:543.35px;font-size:29px;line-height:29px;font-weight:400;color:#000;letter-spacing:-0.038px">Estimated taxes</div>
<div class="t" style="left:1526.20px;top:605.84px;font-size:40px;line-height:40px;font-weight:700;color:#000;letter-spacing:-1.475px">Total</div>
<div class="t" style="left:2326.46px;top:431.65px;font-size:29px;line-height:29px;font-weight:400;color:#000;letter-spacing:0.000px">$20.00</div>
<div class="t" style="left:2326.46px;top:487.65px;font-size:29px;line-height:29px;font-weight:400;color:#000;letter-spacing:0.000px">$10.00</div>
<div class="t" style="left:2326.46px;top:543.65px;font-size:29px;line-height:29px;font-weight:400;color:#000;letter-spacing:0.000px">$10.00</div>
<div class="t" style="left:2203.10px;top:619.88px;font-size:24px;line-height:24px;font-weight:400;color:#707070;letter-spacing:0.130px">CAD</div>
<div class="t" style="left:2273.00px;top:603.80px;font-size:43px;line-height:43px;font-weight:700;color:#000;letter-spacing:1.924px">$40.00</div>
<div class="t" style="left:1637.18px;top:201.38px;font-size:24px;line-height:24px;font-weight:700;color:#fff;letter-spacing:0.000px">1</div>
</body></html>
